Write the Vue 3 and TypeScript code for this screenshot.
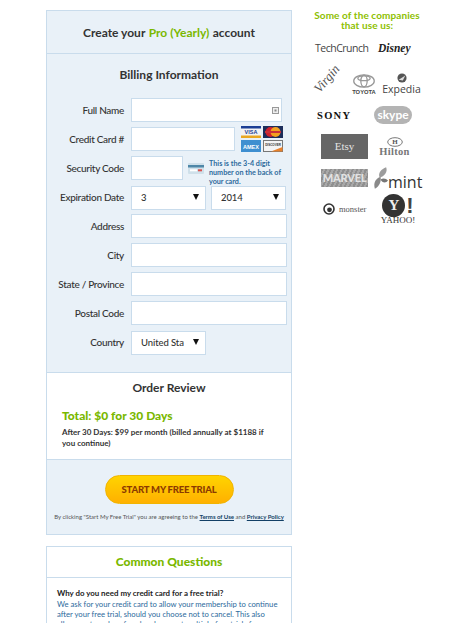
<script setup lang="ts">
const rows = ['Address', 'City', 'State / Province', 'Postal Code']
</script>

<template>
  <div class="page">
    <main class="main">
      <section class="panel">
        <h1 class="title">Create your <span class="green">Pro (Yearly)</span> account</h1>
        <div class="billing">
          <h2 class="billing-title">Billing Information</h2>
          <div class="row">
            <label class="label">Full Name</label>
            <div class="input-wrap">
              <input class="input name" />
              <svg class="autofill" width="7" height="7" viewBox="0 0 7 7"><rect x=".5" y=".5" width="6" height="6" fill="#eee" stroke="#999"/><rect x="2.5" y="2.5" width="2" height="2" fill="#888"/></svg>
            </div>
          </div>
          <div class="row">
            <label class="label">Credit Card #</label>
            <input class="input card" />
            <div class="cards">
              <svg width="20" height="12" viewBox="0 0 20 12"><rect width="20" height="12" fill="#f3f3f3"/><rect width="20" height="2.5" fill="#1c3f94"/><rect y="9.5" width="20" height="2.5" fill="#e9a822"/><text x="10" y="8.4" class="ct visa">VISA</text></svg>
              <svg width="20" height="12" viewBox="0 0 20 12"><rect width="20" height="12" fill="#1d2d5a"/><circle cx="7.5" cy="6" r="5" fill="#d0202c"/><circle cx="12.5" cy="6" r="5" fill="#f3a11f"/><rect x="2" y="5" width="16" height="2" fill="#c9303a"/></svg>
              <svg width="20" height="12" viewBox="0 0 20 12"><rect width="20" height="12" fill="#3f8fd0"/><text x="10" y="8.5" class="ct amex">AMEX</text></svg>
              <svg width="20" height="12" viewBox="0 0 20 12"><rect x=".5" y=".5" width="19" height="11" fill="#f4f4f4" stroke="#777"/><path d="M8 11.5 19.5 7v4.5z" fill="#e8812b"/><text x="10" y="6" class="ct disc">DISCOVER</text></svg>
            </div>
          </div>
          <div class="row">
            <label class="label">Security Code</label>
            <input class="input code" />
            <svg class="cvv" width="16" height="11" viewBox="0 0 16 11"><rect width="16" height="11" rx="1" fill="#cfe0ea"/><rect y="2" width="16" height="2.5" fill="#4f87a8"/><rect x="2" y="6.3" width="7" height="2" fill="#fff"/><rect x="10" y="6.3" width="4" height="2" fill="#d9534f"/></svg>
            <p class="hint">This is the 3-4 digit number on the back of your card.</p>
          </div>
          <div class="row row-select">
            <label class="label">Expiration Date</label>
            <div class="select-wrap month"><select class="select"><option>3</option></select></div>
            <div class="select-wrap year"><select class="select"><option>2014</option></select></div>
          </div>
          <div v-for="r in rows" :key="r" class="row">
            <label class="label">{{ r }}</label>
            <input class="input full" />
          </div>
          <div class="row row-select">
            <label class="label">Country</label>
            <div class="select-wrap month"><select class="select"><option>United States</option></select></div>
          </div>
        </div>
        <div class="review">
          <h2 class="review-title">Order Review</h2>
          <p class="total">Total: $0 for 30 Days</p>
          <p class="after">After 30 Days: $99 per month (billed annually at $1188 if you continue)</p>
        </div>
        <div class="cta">
          <button class="trial">START MY FREE TRIAL</button>
          <p class="legal">By clicking "Start My Free Trial" you are agreeing to the <a>Terms of Use</a> and <a>Privacy Policy</a></p>
        </div>
      </section>
      <section class="faq">
        <h2 class="faq-title">Common Questions</h2>
        <div class="faq-body">
          <p class="q">Why do you need my credit card for a free trial?</p>
          <p class="a">We ask for your credit card to allow your membership to continue after your free trial, should you choose not to cancel. This also allows us to reduce fraud and prevent multiple free trials for one</p>
        </div>
      </section>
    </main>
    <aside class="side">
      <h3 class="side-title">Some of the companies<br />that use us:</h3>
      <div class="logos l1">
        <span class="techcrunch">TechCrunch</span>
        <span class="disney">Disney</span>
      </div>
      <div class="logos l2">
        <span class="virgin">Virgin</span>
        <div class="toyota">
          <svg width="24" height="14" viewBox="0 0 24 15"><g fill="none" stroke="#999" stroke-width="1.4"><ellipse cx="12" cy="7.5" rx="11" ry="6.6"/><ellipse cx="12" cy="7.5" rx="3.4" ry="6.2"/><ellipse cx="12" cy="4.6" rx="6.6" ry="2.6"/></g></svg>
          <span>TOYOTA</span>
        </div>
        <div class="expedia">
          <svg width="10" height="10" viewBox="0 0 12 12"><circle cx="6" cy="6" r="5.5" fill="#555"/><path d="M2 8 10 3 7 9z" fill="#ddd"/></svg>
          <span>Expedia</span>
        </div>
      </div>
      <div class="logos l3">
        <span class="sony">SONY</span>
        <span class="skype">skype</span>
      </div>
      <div class="logos l4">
        <span class="etsy">Etsy</span>
        <div class="hilton">
          <svg width="16" height="10" viewBox="0 0 16 10"><ellipse cx="8" cy="5" rx="7.3" ry="4.3" fill="none" stroke="#777"/><text x="8" y="7.2" class="h-mark">H</text></svg>
          <span>Hilton</span>
        </div>
      </div>
      <div class="logos l5">
        <span class="marvel">MARVEL</span>
        <div class="mint">
          <svg width="15" height="23" viewBox="0 0 16 24"><path d="M2 23C0 16 3 12 8 10 9 15 7 20 2 23Z" fill="#8a8a8a"/><path d="M7 11C5 6 9 2 14 0 16 5 12 10 7 11Z" fill="#9c9c9c"/><path d="M8 13C11 11 14 12 16 14 14 17 10 17 8 13Z" fill="#777"/></svg>
          <span>mint</span>
        </div>
      </div>
      <div class="logos l6">
        <div class="monster">
          <svg width="12" height="12" viewBox="0 0 12 12"><circle cx="6" cy="6" r="5" fill="none" stroke="#333" stroke-width="1.6"/><circle cx="6.5" cy="6.8" r="2.4" fill="#333"/></svg>
          <span>monster</span>
        </div>
        <div class="yahoo">
          <div class="y-top">
            <span class="y-badge">Y</span>
            <span class="y-bang">!</span>
          </div>
          <span class="y-word">YAHOO!</span>
        </div>
      </div>
    </aside>
  </div>
</template>

<style scoped>
.page { display: flex; align-items: flex-start; padding: 10px 0 0 46px; width: 407px; height: 613px; overflow: hidden; font-family: Lato, "Open Sans", sans-serif; color: #333; }
.main { width: 246px; flex: none; }
.side { width: 134px; margin-left: 8px; flex: none; }
.panel { border: 1px solid #c9dcec; background: #e9f1f8; }
.green { color: #7ab800; }
.title { margin: 0; height: 42px; display: flex; align-items: center; justify-content: center; gap: .28em; font-size: 12px; font-weight: 700; color: #333; border-bottom: 1px solid #c9dcec; }
.billing { height: 318px; box-sizing: border-box; }
.billing-title { margin: 0; padding-top: 13px; height: 44px; box-sizing: border-box; text-align: center; font-size: 12px; font-weight: 700; line-height: 16px; }
.row { display: flex; align-items: center; height: 24px; margin-bottom: 5px; }
.row-select { height: 24px; }
.label { width: 77px; margin-right: 7px; padding-bottom: 1px; flex: none; text-align: right; font-size: 10px; font-weight: 500; letter-spacing: -.3px; color: #333; white-space: nowrap; }
.input { height: 24px; box-sizing: border-box; border: 1px solid #c9dcec; background: #fff; padding: 0; outline: none; display: block; }
.input-wrap { position: relative; }
.name { width: 151px; }
.autofill { position: absolute; right: 3px; top: 9px; }
.card { width: 104px; }
.cards { width: 44px; margin-left: 6px; display: grid; grid-template-columns: 20px 20px; gap: 2px 2px; }
.cards svg { display: block; }
.ct { text-anchor: middle; font-family: "Liberation Sans", sans-serif; font-weight: 700; }
.visa { font-size: 5.5px; fill: #1c3f94; }
.amex { font-size: 5.5px; fill: #fff; }
.disc { font-size: 3px; fill: #333; }
.code { width: 52px; }
.cvv { margin-left: 5px; flex: none; }
.hint { width: 76px; margin: 11px 0 0 5px; font-size: 7.2px; line-height: 8.8px; font-weight: 700; color: #2d6a9c; }
.select-wrap { position: relative; height: 24px; width: 75px; flex: none; }
.select-wrap::after { content: ""; position: absolute; right: 7px; top: 9px; border-left: 3.5px solid transparent; border-right: 3.5px solid transparent; border-top: 6px solid #111; pointer-events: none; }
.year { margin-left: 5px; }
.select { appearance: none; width: 100%; height: 100%; box-sizing: border-box; border: 1px solid #c9dcec; background: #fff; padding: 0 21px 0 9px; font: 500 9.5px Lato, sans-serif; letter-spacing: -.1px; color: #333; outline: none; border-radius: 0; }
.full { width: 156px; }
.review { background: #fff; border-top: 1px solid #c9dcec; height: 87px; box-sizing: border-box; padding: 7px 15px 0; }
.review-title { margin: 0 0 12px; text-align: center; font-size: 12px; font-weight: 700; line-height: 16px; }
.total { margin: 0 0 3px; font-size: 12px; font-weight: 900; color: #7ab800; line-height: 16px; }
.after { margin: 0; font-size: 8px; font-weight: 700; line-height: 10.5px; color: #333; }
.cta { border-top: 1px solid #c9dcec; height: 75px; box-sizing: border-box; padding-top: 15px; text-align: center; }
.trial { display: block; margin: 0 auto; width: 129px; height: 29px; border: 1px solid #f1b400; border-radius: 15px; background: linear-gradient(#ffd400, #ffb000); color: #8b3a00; font: 900 9.5px Lato, sans-serif; letter-spacing: -.2px; padding: 0; }
.legal { margin: 9px -4px 0; font-size: 6px; line-height: 8px; color: #555; white-space: nowrap; }
.legal a { color: #123f66; text-decoration: underline; font-weight: 700; }
.faq { margin-top: 11px; border: 1px solid #c9dcec; background: #fff; }
.faq-title { margin: 0; height: 31px; box-sizing: border-box; padding-bottom: 2px; display: flex; align-items: center; justify-content: center; border-bottom: 1px solid #c9dcec; font-size: 12px; font-weight: 900; color: #7ab800; }
.faq-body { padding: 10px 10px 0; }
.q { margin: 0; font-size: 7.9px; font-weight: 700; color: #222; line-height: 11px; }
.a { margin: 0; font-size: 7.7px; line-height: 10px; color: #2d6a9c; }
.side-title { margin: 0 0 8px; text-align: center; font-size: 10px; line-height: 10px; letter-spacing: .1px; font-weight: 700; color: #8dc000; }
.logos { display: flex; align-items: center; color: #444; white-space: nowrap; }
.l1 { height: 20px; padding-left: 15px; gap: 10px; }
.techcrunch { width: 53px; font: 400 10.5px "Open Sans", sans-serif; letter-spacing: -.5px; color: #444; }
.disney { font: italic 700 11.5px "Liberation Serif", serif; color: #222; }
.l2 { height: 30px; margin-top: 7px; padding: 0 0 3px 12px; gap: 12px; align-items: flex-end; }
.virgin { width: 26px; font: italic 400 13px "Liberation Serif", serif; transform: translateY(-6px) rotate(-50deg); display: block; color: #555; }
.toyota { display: flex; flex-direction: column; align-items: center; width: 28px; font: 700 5.8px "Liberation Sans", sans-serif; color: #444; gap: 1px; }
.expedia { display: flex; flex-direction: column; align-items: center; width: 39px; margin-left: -8px; font: 400 10.5px "Open Sans", sans-serif; color: #444; line-height: 12px; }
.l3 { height: 22px; margin-top: 6px; padding-left: 17px; gap: 14px; }
.sony { width: 43px; font: 700 10.5px "Liberation Serif", serif; letter-spacing: 1.3px; color: #111; }
.skype { width: 38px; height: 18px; text-align: center; border-radius: 9px; background: #b4b4b4; color: #fff; font: 700 12px/17px Lato, sans-serif; }
.l4 { height: 25px; margin-top: 8px; padding-left: 21px; gap: 11px; }
.etsy { width: 47px; height: 25px; background: #666; color: #e4e4e4; text-align: center; font: 400 11px/25px "Liberation Serif", serif; }
.hilton { display: flex; flex-direction: column; align-items: center; width: 31px; font: 700 10.5px "Liberation Serif", serif; letter-spacing: .3px; color: #777; line-height: 10px; }
.h-mark { text-anchor: middle; font: 700 7px "Liberation Serif", serif; fill: #555; }
.l5 { height: 26px; margin-top: 6px; padding-left: 21px; gap: 5px; }
.marvel { width: 47px; height: 18px; background: repeating-linear-gradient(115deg, #8f8f8f 0 2px, #a8a8a8 2px 4px); color: #e2e2e2; text-align: center; font: 900 11px/18px Lato, sans-serif; letter-spacing: -.2px; }
.mint { display: flex; align-items: flex-end; font: 400 16px/15px "Open Sans", sans-serif; color: #333; }
.l6 { height: 30px; margin-top: 3px; padding-left: 23px; gap: 11px; }
.monster { width: 46px; display: flex; align-items: center; gap: 4px; font: 400 8.5px "Liberation Serif", serif; color: #555; }
.yahoo { width: 36px; display: flex; flex-direction: column; align-items: center; }
.y-top { display: flex; align-items: center; gap: 1px; height: 23px; }
.y-badge { width: 23px; height: 23px; border-radius: 50%; background: #333; color: #eee; text-align: center; font: 700 15px/23px "Liberation Serif", serif; }
.y-bang { font: 900 22px/22px "Liberation Sans", sans-serif; color: #444; }
.y-word { font: 400 9px/7px "Liberation Serif", serif; color: #333; }
</style>

<style>
html, body { background: #fff; }
</style>
